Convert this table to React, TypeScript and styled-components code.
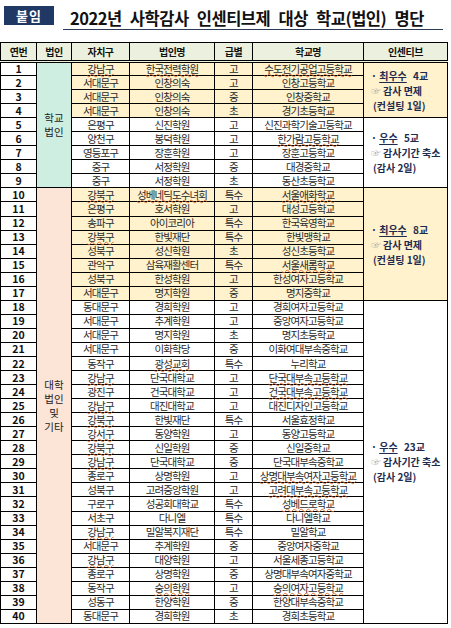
import React from "react";
import styled, { createGlobalStyle } from "styled-components";

type Row = [number, string, string, string, string];

// "*" prefix = text carrying the spell-check wavy underline seen in the sheet
const rows: Row[] = [
    [1, "*강남구", "*한국전력학원", "고", "*수도전기공업고등학교"],
    [2, "서대문구", "인창의숙", "고", "인창고등학교"],
    [3, "서대문구", "인창의숙", "중", "인창중학교"],
    [4, "서대문구", "인창의숙", "초", "경기초등학교"],
    [5, "은평구", "신진학원", "고", "신진과학기술고등학교"],
    [6, "양천구", "봉덕학원", "고", "*한가람고등학교"],
    [7, "영등포구", "장훈학원", "고", "장훈고등학교"],
    [8, "중구", "서정학원", "중", "대경중학교"],
    [9, "중구", "서정학원", "초", "동산초등학교"],
    [10, "*강북구", "*성베네딕도수녀회", "특수", "*서울애화학교"],
    [11, "은평구", "호서학원", "고", "대성고등학교"],
    [12, "송파구", "아이코리아", "특수", "한국육영학교"],
    [13, "*강북구", "한빛재단", "특수", "한빛맹학교"],
    [14, "성북구", "성신학원", "초", "성신초등학교"],
    [15, "관악구", "삼육재활센터", "특수", "*서울새롬학교"],
    [16, "성북구", "한성학원", "고", "한성여자고등학교"],
    [17, "서대문구", "명지학원", "중", "명지중학교"],
    [18, "동대문구", "경희학원", "고", "경희여자고등학교"],
    [19, "서대문구", "추계학원", "고", "중앙여자고등학교"],
    [20, "서대문구", "명지학원", "초", "명지초등학교"],
    [21, "서대문구", "이화학당", "중", "이화여대부속중학교"],
    [22, "동작구", "*광성교회", "특수", "누리학교"],
    [23, "*강남구", "단국대학교", "고", "*단국대부속고등학교"],
    [24, "광진구", "건국대학교", "고", "*건국대부속고등학교"],
    [25, "*강남구", "대진대학교", "고", "대진디자인고등학교"],
    [26, "*강북구", "한빛재단", "특수", "서울효정학교"],
    [27, "*강서구", "동양학원", "고", "동양고등학교"],
    [28, "*강북구", "신일학원", "중", "신일중학교"],
    [29, "*강남구", "단국대학교", "중", "단국대부속중학교"],
    [30, "종로구", "상명학원", "고", "*상명대부속여자고등학교"],
    [31, "성북구", "고려중앙학원", "고", "*고려대부속고등학교"],
    [32, "구로구", "성공회대학교", "특수", "*성베드로학교"],
    [33, "서초구", "다니엘", "특수", "다니엘학교"],
    [34, "*강남구", "밀알복지재단", "특수", "밀알학교"],
    [35, "서대문구", "추계학원", "중", "중앙여자중학교"],
    [36, "*강남구", "대양학원", "고", "서울세종고등학교"],
    [37, "종로구", "상명학원", "중", "상명대부속여자중학교"],
    [38, "동작구", "*숭의학원", "고", "*숭의여자고등학교"],
    [39, "성동구", "한양학원", "중", "한양대부속중학교"],
    [40, "동대문구", "경희학원", "초", "경희초등학교"],
];

const corpGroups: Record<number, { span: number; lines: string[]; tone: string }> = {
    1: { span: 9, lines: ["학교", "법인"], tone: "#cdeee1" },
    10: { span: 31, lines: ["대학", "법인", "및", "기타"], tone: "#fce4d6" },
};

const incentiveGroups: Record<number, { span: number; rank: string; count: string; benefit: string; note: string; hl: boolean }> = {
    1: { span: 4, rank: "최우수", count: "4교", benefit: "감사 면제", note: "(컨설팅 1일)", hl: true },
    5: { span: 5, rank: "우수", count: "5교", benefit: "감사기간 축소", note: "(감사 2일)", hl: false },
    10: { span: 8, rank: "최우수", count: "8교", benefit: "감사 면제", note: "(컨설팅 1일)", hl: true },
    18: { span: 23, rank: "우수", count: "23교", benefit: "감사기간 축소", note: "(감사 2일)", hl: false },
};

const isHighlighted = (n: number) => (n >= 1 && n <= 4) || (n >= 10 && n <= 17);

function CellText({ value }: { value: string }) {
    if (value.startsWith("*")) return <Wavy>{value.slice(1)}</Wavy>;
    return <>{value}</>;
}

function App() {
    return (
        <Page>
            <GlobalStyle />
            <TitleBar>
                <Badge>붙임</Badge>
                <TitleWrap>
                    <Title>2022년 사학감사 인센티브제 대상 학교(법인) 명단</Title>
                </TitleWrap>
            </TitleBar>

            <Sheet>
                <colgroup>
                    <col style={{ width: 36 }} />
                    <col style={{ width: 35 }} />
                    <col style={{ width: 58 }} />
                    <col style={{ width: 85 }} />
                    <col style={{ width: 38 }} />
                    <col style={{ width: 111 }} />
                    <col style={{ width: 84 }} />
                </colgroup>
                <thead>
                    <tr>
                        <HeadCell>연번</HeadCell>
                        <HeadCell>법인</HeadCell>
                        <HeadCell>자치구</HeadCell>
                        <HeadCell>법인명</HeadCell>
                        <HeadCell>급별</HeadCell>
                        <HeadCell>학교명</HeadCell>
                        <HeadCell>인센티브</HeadCell>
                    </tr>
                </thead>
                <tbody>
                    {rows.map(([no, district, corp, level, school]) => {
                        const hl = isHighlighted(no);
                        const corpGroup = corpGroups[no];
                        const inc = incentiveGroups[no];
                        return (
                            <BodyRow key={no}>
                                <NoCell>{no}</NoCell>
                                {corpGroup && (
                                    <GroupCell rowSpan={corpGroup.span} $tone={corpGroup.tone}>
                                        {corpGroup.lines.map((l) => (
                                            <div key={l}>{l}</div>
                                        ))}
                                    </GroupCell>
                                )}
                                <Cell $hl={hl}>
                                    <CellText value={district} />
                                </Cell>
                                <Cell $hl={hl}>
                                    <CellText value={corp} />
                                </Cell>
                                <Cell $hl={hl}>{level}</Cell>
                                <Cell $hl={hl}>
                                    <CellText value={school} />
                                </Cell>
                                {inc && (
                                    <IncentiveCell rowSpan={inc.span} $hl={inc.hl}>
                                        <IncLine>
                                            · <Rank>{inc.rank}</Rank> {inc.count}
                                        </IncLine>
                                        <IncLine>
                                            <Pointer>☞</Pointer>
                                            {inc.benefit}
                                        </IncLine>
                                        <IncLine $indent>{inc.note}</IncLine>
                                    </IncentiveCell>
                                )}
                            </BodyRow>
                        );
                    })}
                </tbody>
            </Sheet>
        </Page>
    );
}

const GlobalStyle = createGlobalStyle`
  html, body {
    margin: 0;
    padding: 0;
    background: #ffffff;
  }
  body {
    font-family: "Noto Sans CJK KR", "Noto Sans", sans-serif;
    color: #222222;
  }
`;

const Page = styled.div`
    width: 451px;
    height: 628px;
    overflow: hidden;
    background: #ffffff;
`;

const TitleBar = styled.div`
    display: flex;
    align-items: flex-start;
    padding: 6px 8px 0 4px;
    height: 36px;
    box-sizing: border-box;
`;

const Badge = styled.div`
    width: 50px;
    height: 19px;
    background: #1f3864;
    color: #ffffff;
    font-size: 13px;
    font-weight: 700;
    line-height: 19px;
    text-align: center;
    letter-spacing: 1px;
`;

const TitleWrap = styled.div`
    flex: 1;
    margin-left: 9px;
    padding-left: 7px;
    height: 23px;
    border-bottom: 1px solid #2b3a55;
    display: flex;
    align-items: center;
`;

const Title = styled.div`
    font-size: 16.5px;
    font-weight: 700;
    color: #111111;
    letter-spacing: -0.5px;
    word-spacing: 5px;
    white-space: nowrap;
`;

const Sheet = styled.table`
    margin-top: 6px;
    width: 447px;
    table-layout: fixed;
    border-collapse: collapse;
    border: 1px solid #000000;
    font-size: 10px;
    line-height: 12px;
`;

const HeadCell = styled.th`
    height: 17px;
    padding: 0;
    background: #ebf1de;
    border: 1px solid #000000;
    border-bottom: 3px double #000000;
    font-weight: 700;
    font-size: 10px;
    color: #111111;
    text-align: center;
    letter-spacing: -0.5px;
`;

const BodyRow = styled.tr`
    height: 14.05px;
`;

const NoCell = styled.td`
    padding: 0;
    border: 1px solid #000000;
    text-align: center;
    font-weight: 700;
    font-size: 10.5px;
    color: #111111;
    white-space: nowrap;
`;

const GroupCell = styled.td<{ $tone: string }>`
    padding: 0;
    border: 1px solid #000000;
    background: ${(p) => p.$tone};
    text-align: center;
    vertical-align: middle;
    font-size: 10.5px;
    line-height: 14px;
    color: #222222;
`;

const Cell = styled.td<{ $hl?: boolean }>`
    padding: 0;
    border: 1px solid #000000;
    background: ${(p) => (p.$hl ? "#fff2cc" : "#ffffff")};
    text-align: center;
    white-space: nowrap;
    font-size: 10.5px;
    letter-spacing: -0.9px;
    color: #2a2a2a;
`;

const Wavy = styled.span`
    text-decoration-line: underline;
    text-decoration-style: wavy;
    text-decoration-color: #e0702c;
    text-decoration-thickness: 1px;
    text-decoration-skip-ink: none;
    text-underline-offset: 0px;
`;

const IncentiveCell = styled.td<{ $hl: boolean }>`
    padding: 0 0 0 7px;
    border: 1px solid #000000;
    background: ${(p) => (p.$hl ? "#fff2cc" : "#ffffff")};
    vertical-align: middle;
    text-align: left;
    white-space: nowrap;
    font-weight: 700;
    font-size: 10px;
    color: #1d2b4f;
`;

const IncLine = styled.div<{ $indent?: boolean }>`
    line-height: 15px;
    padding-left: ${(p) => (p.$indent ? "2px" : "0")};
`;

const Rank = styled.span`
    text-decoration: underline;
    text-underline-offset: 2px;
    margin-right: 4px;
`;

const Pointer = styled.span`
    color: #b0b0b0;
    font-weight: 400;
    margin-right: 2px;
`;

export default App;
